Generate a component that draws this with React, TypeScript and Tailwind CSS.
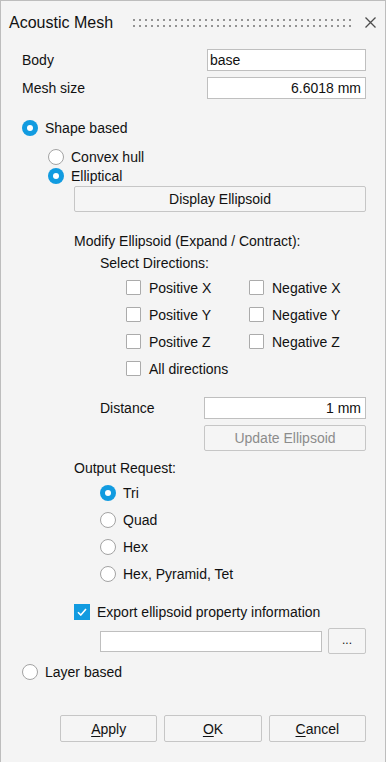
import React from "react";

const FONT = { fontFamily: '"Liberation Sans", Arial, sans-serif' };

function Radio({ checked }: { checked?: boolean }) {
  if (checked) {
    return (
      <span className="flex h-[16px] w-[16px] shrink-0 items-center justify-center rounded-full bg-[#119be0]">
        <span className="h-[6px] w-[6px] rounded-full bg-white" />
      </span>
    );
  }
  return <span className="h-[16px] w-[16px] shrink-0 rounded-full border border-[#a3a3a3] bg-white" />;
}

function Check({ checked }: { checked?: boolean }) {
  if (checked) {
    return (
      <span className="flex h-[16px] w-[16px] shrink-0 items-center justify-center bg-[#119be0]">
        <svg width="10" height="8" viewBox="0 0 10 8">
          <path d="M1 4.2 L3.8 7 L9 1" fill="none" stroke="white" strokeWidth="1.6" />
        </svg>
      </span>
    );
  }
  return <span className="h-[15px] w-[15px] shrink-0 rounded-[1px] border border-[#ababab] bg-white" />;
}

function Dots() {
  const dots: React.ReactNode[] = [];
  for (let i = 0; i < 37; i++) {
    dots.push(<rect key={"a" + i} x={i * 6} y={0} width={2} height={2} fill="#939393" />);
    dots.push(<rect key={"b" + i} x={i * 6} y={6} width={2} height={2} fill="#939393" />);
  }
  return (
    <svg width="220" height="8" viewBox="0 0 220 8" className="shrink-0">
      {dots}
    </svg>
  );
}

function CheckRow({ label }: { label: string }) {
  return (
    <div className="flex items-center gap-[8px]">
      <Check />
      <span>{label}</span>
    </div>
  );
}

function RadioRow({ label, checked, h = "h-[27px]" }: { label: string; checked?: boolean; h?: string }) {
  return (
    <div className={`flex items-center gap-[7px] ${h}`}>
      <Radio checked={checked} />
      <span>{label}</span>
    </div>
  );
}

export default function App() {
  return (
    <div
      style={FONT}
      className="flex h-[762px] w-[386px] flex-col border-x border-t border-[#bdbdbd] bg-[#f4f4f4] text-[14px] leading-none text-[#111111]"
    >
      {/* Title bar */}
      <div className="flex h-[43px] shrink-0 items-center pl-[8px] pr-[9px]">
        <span className="text-[16px]">Acoustic Mesh</span>
        <div className="ml-[20px] mt-[1px]">
          <Dots />
        </div>
        <svg width="11" height="11" viewBox="0 0 11 11" className="ml-auto">
          <path d="M0.5 0.5 L10.5 10.5 M10.5 0.5 L0.5 10.5" stroke="#4d4d4d" strokeWidth="1.3" />
        </svg>
      </div>

      {/* Body */}
      <div className="mt-[5px] flex h-[22px] items-center pl-[21px] pr-[19px]">
        <span>Body</span>
        <div className="ml-auto flex h-[22px] w-[159px] items-center border border-[#bfbfbf] bg-white pl-[2px]">
          base
        </div>
      </div>
      <div className="mt-[6px] flex h-[22px] items-center pl-[21px] pr-[19px]">
        <span>Mesh size</span>
        <div className="ml-auto flex h-[22px] w-[159px] items-center justify-end border border-[#bfbfbf] bg-white pr-[4px]">
          6.6018 mm
        </div>
      </div>

      {/* Shape based */}
      <div className="mt-[19px] pl-[21px]">
        <RadioRow label="Shape based" checked h="h-[20px]" />
      </div>
      <div className="mt-[9px] pl-[47px]">
        <RadioRow label="Convex hull" h="h-[19px]" />
        <RadioRow label="Elliptical" checked h="h-[19px]" />
      </div>
      <div className="mt-[1px] pl-[73px] pr-[19px]">
        <button className="flex h-[26px] w-full items-center justify-center rounded-[2px] border border-[#c6c6c6] bg-[#f5f5f5]">
          Display Ellipsoid
        </button>
      </div>

      {/* Modify ellipsoid */}
      <div className="mt-[19px] flex h-[20px] items-center pl-[73px]">Modify Ellipsoid (Expand / Contract):</div>
      <div className="mt-[2px] flex h-[20px] items-center pl-[99px]">Select Directions:</div>
      <div className="mt-[1px] grid grid-cols-[123px_1fr] grid-rows-[27px_27px_27px_27px] items-center pl-[125px]">
        <CheckRow label="Positive X" />
        <CheckRow label="Negative X" />
        <CheckRow label="Positive Y" />
        <CheckRow label="Negative Y" />
        <CheckRow label="Positive Z" />
        <CheckRow label="Negative Z" />
        <CheckRow label="All directions" />
      </div>

      {/* Distance */}
      <div className="mt-[15px] flex h-[22px] items-center pl-[99px] pr-[19px]">
        <span>Distance</span>
        <div className="ml-auto flex h-[22px] w-[162px] items-center justify-end border border-[#bfbfbf] bg-white pr-[4px]">
          1 mm
        </div>
      </div>
      <div className="mt-[6px] flex justify-end pr-[19px]">
        <button className="flex h-[26px] w-[162px] items-center justify-center rounded-[2px] border border-[#c6c6c6] bg-[#f5f5f5] text-[#8c8c8c]">
          Update Ellipsoid
        </button>
      </div>

      {/* Output request */}
      <div className="mt-[7px] flex h-[20px] items-center pl-[73px]">Output Request:</div>
      <div className="mt-[1px] pl-[99px]">
        <RadioRow label="Tri" checked />
        <RadioRow label="Quad" />
        <RadioRow label="Hex" />
        <RadioRow label="Hex, Pyramid, Tet" />
      </div>

      {/* Export */}
      <div className="mt-[15px] flex h-[20px] items-center gap-[7px] pl-[73px]">
        <Check checked />
        <span>Export ellipsoid property information</span>
      </div>
      <div className="mt-[6px] flex h-[26px] items-center pl-[99px] pr-[19px]">
        <div className="h-[21px] w-[222px] border border-[#bfbfbf] bg-white" />
        <button className="ml-auto flex h-[26px] w-[38px] items-end justify-center rounded-[2px] border border-[#c6c6c6] bg-[#f5f5f5] pb-[7px] text-[12px]">
          ...
        </button>
      </div>

      {/* Layer based */}
      <div className="mt-[8px] pl-[21px]">
        <RadioRow label="Layer based" h="h-[20px]" />
      </div>

      {/* Buttons */}
      <div className="mt-[33px] flex gap-[7px] pl-[59px] pr-[19px]">
        <button className="flex h-[27px] w-[98px] items-center justify-center rounded-[2px] border border-[#c6c6c6] bg-[#f5f5f5]">
          <span className="underline underline-offset-2">A</span>pply
        </button>
        <button className="flex h-[27px] w-[98px] items-center justify-center rounded-[2px] border border-[#c6c6c6] bg-[#f5f5f5]">
          <span className="underline underline-offset-2">O</span>K
        </button>
        <button className="flex h-[27px] w-[98px] items-center justify-center rounded-[2px] border border-[#c6c6c6] bg-[#f5f5f5]">
          <span className="underline underline-offset-2">C</span>ancel
        </button>
      </div>
    </div>
  );
}
